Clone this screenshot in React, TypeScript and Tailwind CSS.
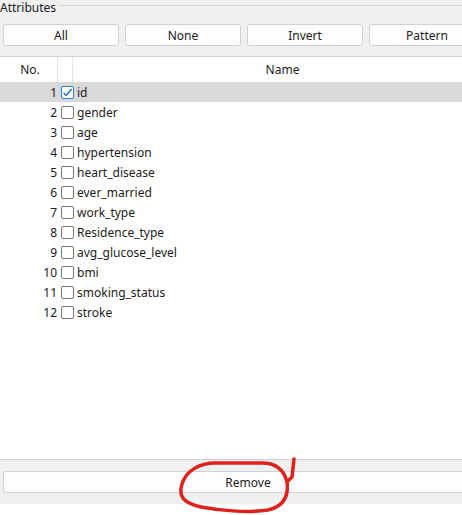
import React from "react";

const attributes = [
  "id",
  "gender",
  "age",
  "hypertension",
  "heart_disease",
  "ever_married",
  "work_type",
  "Residence_type",
  "avg_glucose_level",
  "bmi",
  "smoking_status",
  "stroke",
];

function CheckBox({ checked }: { checked: boolean }) {
  if (checked) {
    return (
      <div className="w-[13px] h-[13px] rounded-[2px] border border-[#2b7bd6] bg-white flex items-center justify-center">
        <svg width="11" height="11" viewBox="0 0 11 11">
          <path d="M1.5 5.8 L4.2 8.5 L9.6 2" fill="none" stroke="#1f6fd0" strokeWidth="1.4" />
        </svg>
      </div>
    );
  }
  return <div className="w-[13px] h-[13px] rounded-[2px] border border-[#777777] bg-white" />;
}

function ToolButton({ label, className }: { label: string; className?: string }) {
  return (
    <div
      className={
        "h-[22px] flex items-center justify-center pt-[1px] rounded-[3px] border border-[#d0d0d0] bg-[#fdfdfd] text-[12px] text-[#1b1b1b] " +
        (className ?? "")
      }
    >
      {label}
    </div>
  );
}

export default function App() {
  return (
    <div
      className="relative w-[462px] h-[515px] overflow-hidden bg-white flex flex-col"
      style={{ fontFamily: '"Noto Sans", "Open Sans", sans-serif' }}
    >
      {/* attributes group */}
      <div className="h-[56px] bg-[#f0f0f0] flex flex-col shrink-0">
        <div className="h-[16px] flex items-center">
          <span className="text-[12px] leading-[16px] text-[#1b1b1b]">Attributes</span>
          <div className="flex-1 h-px bg-[#d4d4d4] ml-[3px] -mt-[6px]" />
        </div>
        <div className="flex gap-[6px] pl-[3px] mt-[8px] w-[492px]">
          <ToolButton label="All" className="w-[116px]" />
          <ToolButton label="None" className="w-[116px]" />
          <ToolButton label="Invert" className="w-[116px]" />
          <ToolButton label="Pattern" className="w-[116px]" />
        </div>
      </div>

      {/* table */}
      <div className="flex-1 border-t border-[#d0d0d0] flex flex-col min-h-0">
        <div className="h-[25px] flex text-[12px] text-[#1b1b1b] shrink-0">
          <div className="w-[58px] border-r border-[#e6e6e6] flex items-center justify-center pl-[3px]">No.</div>
          <div className="w-[15px] border-r border-[#e6e6e6]" />
          <div className="flex-1 flex items-center justify-center pl-[30px]">Name</div>
        </div>
        {attributes.map((name, i) => (
          <div
            key={name}
            className={
              "h-[20px] flex items-center text-[12px] text-[#1b1b1b] shrink-0 " +
              (i === 0 ? "bg-[#d9d9d9]" : "")
            }
          >
            <div className="w-[57px] text-right pt-[1px]">{i + 1}</div>
            <div className="ml-[4px]">
              <CheckBox checked={i === 0} />
            </div>
            <div className="ml-[3px] pt-[1px]">{name}</div>
          </div>
        ))}
      </div>

      {/* bottom action bar */}
      <div className="h-[45px] bg-[#f0f0f0] border-t border-[#d0d0d0] shrink-0 pt-[11px] pl-[3px]">
        <ToolButton label="Remove" className="w-[490px]" />
      </div>
      <div className="h-[11px] bg-white shrink-0" />

      {/* red marker annotation */}
      <svg className="absolute left-0 top-0 pointer-events-none" width="462" height="515" viewBox="0 0 462 515">
        <path
          d="M287 482 C284 470 276 463 262 463 L216 463 C199 463 186 471 182 484 C178 497 184 503 201 507 C222 511 250 513 268 510 C282 507 289 498 287 482 L292 477 L294 459"
          fill="none"
          stroke="#e0201c"
          strokeWidth="3.5"
          strokeLinecap="round"
          strokeLinejoin="round"
        />
      </svg>
    </div>
  );
}
